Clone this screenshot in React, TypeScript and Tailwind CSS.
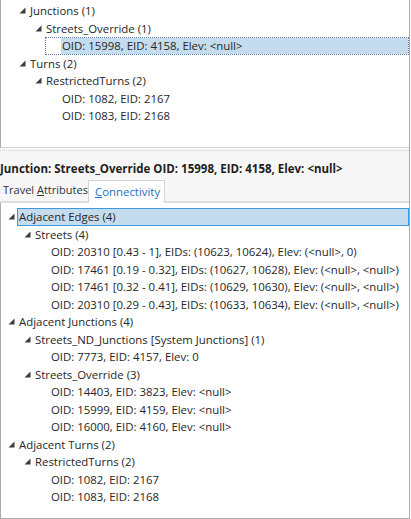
import React from "react";

type Node = {
  label: string;
  children?: Node[];
  selected?: "focus" | "active";
};

const topTree: Node[] = [
  {
    label: "Junctions (1)",
    children: [
      {
        label: "Streets_Override (1)",
        children: [{ label: "OID: 15998, EID: 4158, Elev: <null>", selected: "focus" }],
      },
    ],
  },
  {
    label: "Turns (2)",
    children: [
      {
        label: "RestrictedTurns (2)",
        children: [{ label: "OID: 1082, EID: 2167" }, { label: "OID: 1083, EID: 2168" }],
      },
    ],
  },
];

const connectivity: Node[] = [
  {
    label: "Adjacent Edges (4)",
    selected: "active",
    children: [
      {
        label: "Streets (4)",
        children: [
          { label: "OID: 20310 [0.43 - 1], EIDs: (10623, 10624), Elev: (<null>, 0)" },
          { label: "OID: 17461 [0.19 - 0.32], EIDs: (10627, 10628), Elev: (<null>, <null>)" },
          { label: "OID: 17461 [0.32 - 0.41], EIDs: (10629, 10630), Elev: (<null>, <null>)" },
          { label: "OID: 20310 [0.29 - 0.43], EIDs: (10633, 10634), Elev: (<null>, <null>)" },
        ],
      },
    ],
  },
  {
    label: "Adjacent Junctions (4)",
    children: [
      {
        label: "Streets_ND_Junctions [System Junctions] (1)",
        children: [{ label: "OID: 7773, EID: 4157, Elev: 0" }],
      },
      {
        label: "Streets_Override (3)",
        children: [
          { label: "OID: 14403, EID: 3823, Elev: <null>" },
          { label: "OID: 15999, EID: 4159, Elev: <null>" },
          { label: "OID: 16000, EID: 4160, Elev: <null>" },
        ],
      },
    ],
  },
  {
    label: "Adjacent Turns (2)",
    children: [
      {
        label: "RestrictedTurns (2)",
        children: [{ label: "OID: 1082, EID: 2167" }, { label: "OID: 1083, EID: 2168" }],
      },
    ],
  },
];

const Expander = () => (
  <svg width="7" height="7" viewBox="0 0 7 7" className="shrink-0">
    <polygon points="6.5,0.5 6.5,6.5 0.5,6.5" fill="#3c3c3c" />
  </svg>
);

const TreeRow = ({ node, depth, base }: { node: Node; depth: number; base: number }) => {
  const indent = base + depth * 16;
  const hasKids = !!node.children?.length;

  return (
    <>
      {node.selected === "focus" ? (
        // keyboard focus rect starts one level back, selection fill starts at the text
        <div className="flex h-[17.5px] items-center" style={{ paddingLeft: indent - 6 }}>
          <div className="flex h-[18px] flex-1 items-stretch border border-dotted border-[#5b7fa6]">
            <div className="w-[15px] shrink-0" />
            <div className="flex flex-1 items-center whitespace-nowrap bg-[#c5dcef] pl-[1px]">{node.label}</div>
          </div>
        </div>
      ) : (
        <div className="flex h-[17.5px] items-center" style={{ paddingLeft: indent }}>
          <div className="flex w-[11px] shrink-0 items-center">{hasKids && <Expander />}</div>
          {node.selected === "active" ? (
            <div className="-ml-[2px] flex h-[18px] flex-1 items-center whitespace-nowrap border border-[#3c9be0] bg-[#c5dcef] pl-[1px]">
              {node.label}
            </div>
          ) : (
            <span className="whitespace-nowrap">{node.label}</span>
          )}
        </div>
      )}
      {node.children?.map((c, i) => (
        <TreeRow key={i} node={c} depth={depth + 1} base={base} />
      ))}
    </>
  );
};

export default function App() {
  return (
    <div
      className="flex h-[519px] w-[411px] flex-col overflow-hidden bg-white text-[11.4px] text-[#262626]"
      style={{ fontFamily: '"Open Sans", "Noto Sans", sans-serif' }}
    >
      <div className="flex w-[410px] flex-1 flex-col border-r border-[#ababab]">
        {/* object tree */}
        <div className="h-[148px] shrink-0 border-b border-l border-[#d4d4d4] border-l-[#ababab] pt-[2px]">
          {topTree.map((n, i) => (
            <TreeRow key={i} node={n} depth={0} base={18} />
          ))}
        </div>

        {/* splitter grip */}
        <div className="flex h-[5px] shrink-0 items-center bg-[#f7f7f7]">
          <div className="h-[1px] w-full border-t border-dotted border-[#cfcfcf]" />
        </div>

        {/* details header */}
        <div className="h-[27px] shrink-0 whitespace-nowrap bg-[#f7f7f7] pt-[8px] text-[11.5px] leading-[16px] font-bold text-[#1e1e1e]">
          Junction: Streets_Override OID: 15998, EID: 4158, Elev: &lt;null&gt;
        </div>

        {/* tabs */}
        <div className="flex h-[23px] shrink-0 items-stretch bg-[#f7f7f7]">
          <div className="flex w-[88px] items-center whitespace-nowrap border-b-[2px] border-[#dcdcdc] pl-[3px] text-[11px] text-[#333]">
            Travel&nbsp;<span className="underline">A</span>ttributes
          </div>
          <div className="flex w-[77px] items-center border-x border-t border-[#d4d4d4] bg-white pl-[6px] text-[#1d6fc0]">
            <span className="underline">C</span>onnectivity
          </div>
          <div className="flex-1 border-b-[2px] border-[#dcdcdc]" />
        </div>

        {/* connectivity tree */}
        <div className="flex-1 border-b border-l border-[#ababab] pt-[5px]">
          {connectivity.map((n, i) => (
            <TreeRow key={i} node={n} depth={0} base={7} />
          ))}
        </div>
      </div>
    </div>
  );
}
